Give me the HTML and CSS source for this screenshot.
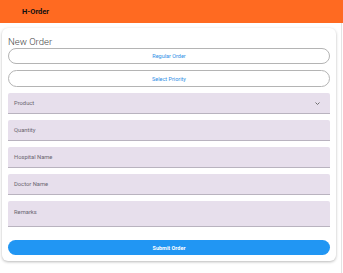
FILE: index.html
```html
<!DOCTYPE html>
<html>
<head>
<meta charset="utf-8">
<link rel="stylesheet" href="styles.css">
</head>
<body>
<header class="topbar"><span class="brand">H-Order</span></header>
<main class="page">
  <section class="card">
    <h1 class="title">New Order</h1>
    <button class="pill">Regular Order</button>
    <button class="pill pill-second">Select Priority</button>
    <div class="field field-select">
      <span class="label">Product</span>
      <svg class="chev" width="5" height="3" viewBox="0 0 5 3"><path d="M0.5 0.5 L2.5 2.5 L4.5 0.5" fill="none" stroke="#6f6f6f" stroke-width="1"/></svg>
    </div>
    <div class="field"><span class="label">Quantity</span></div>
    <div class="field"><span class="label">Hospital Name</span></div>
    <div class="field"><span class="label">Doctor Name</span></div>
    <div class="field field-area"><span class="label">Remarks</span></div>
    <button class="submit">Submit Order</button>
  </section>
</main>
</body>
</html>
```

FILE: styles.css
```css
* { box-sizing: border-box; }
html, body { margin: 0; padding: 0; background: #fff; }
body { font-family: Roboto, "Noto Sans", Arial, sans-serif; width: 343px; height: 273px; overflow: hidden; }

.topbar {
  height: 23px;
  background: #ff6a21;
  display: flex;
  align-items: center;
  padding-left: 22px;
}
.brand { font-size: 7.5px; font-weight: 700; color: #111; }

.page {
  padding: 5px 5px 0 2px;
  border-right: 1px solid #e4e4e4;
  margin-right: 1px;
  height: 250px;
}

.card {
  background: #fff;
  border-radius: 6px;
  box-shadow: 0 1px 3px rgba(0,0,0,0.28);
  padding: 8px 6px 6px 6px;
  display: flex;
  flex-direction: column;
}

.title {
  margin: 0;
  font-size: 9.5px;
  font-weight: 300;
  color: #444;
  line-height: 12px;
}

.pill {
  height: 16px;
  border: 1px solid #b4b4b4;
  border-radius: 9px;
  background: #fff;
  color: #2f8fe6;
  font-family: inherit;
  font-size: 5.5px;
  padding: 0;
  margin: 0;
}
.pill-second { margin-top: 6px; height: 17px; }

.field {
  height: 21px;
  background: #e7dfec;
  border-bottom: 1px solid #b9b3bf;
  border-radius: 2px 2px 0 0;
  margin-top: 6px;
  display: flex;
  align-items: center;
  justify-content: space-between;
  padding: 0 10px 0 6px;
}
.field-area { height: 26px; align-items: flex-start; padding-top: 8px; }
.label { font-size: 5.8px; color: #6a6670; }
.chev { display: block; }

.submit {
  margin-top: 13px;
  height: 15px;
  border: none;
  border-radius: 8px;
  background: #2196f3;
  color: #fff;
  font-family: inherit;
  font-size: 5.5px;
  font-weight: 700;
  padding: 0;
}
```
